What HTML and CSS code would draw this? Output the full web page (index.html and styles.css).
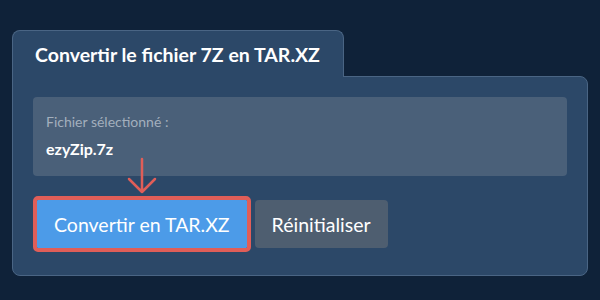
FILE: index.html
```html
<!DOCTYPE html>
<html lang="fr">
<head>
  <meta charset="UTF-8">
  <meta name="viewport" content="width=device-width, initial-scale=1.0">
  <title>Convertir 7Z en TAR.XZ</title>
  <link rel="stylesheet" href="styles.css">
</head>
<body>
  <div class="converter">
    <!-- Onglet titre -->
    <div class="tab">
      <h2>Convertir le fichier 7Z en TAR.XZ</h2>
    </div>

    <div class="panel">
      <div class="file-box">
        <div class="file-label">Fichier sélectionné :</div>
        <div class="file-name">ezyZip.7z</div>
      </div>

      <div class="actions">
        <button class="button button-primary">Convertir en TAR.XZ</button>
        <button class="button button-reset">Réinitialiser</button>
      </div>

      <!-- Flèche vers le bouton -->
      <svg class="hint-arrow" width="30" height="38" viewBox="0 0 30 38">
        <path d="M15 2 V35 M2 22 L15 35 L28 22" fill="none" stroke="#e05e58" stroke-width="2.5" stroke-linecap="round" stroke-linejoin="round"/>
      </svg>
    </div>
  </div>
</body>
</html>
```

FILE: styles.css
```css
body {
  font-family: Lato, "Open Sans", sans-serif;
  margin: 0;
  padding: 30px 12px;
  background-color: #0f2239;
  color: white;
}

.converter {
  width: 576px;
}

.tab {
  position: relative;
  z-index: 1;
  width: 332px;
  box-sizing: border-box;
  margin-bottom: -1px;
  padding: 12px 22px 10px;
  background-color: #2c4868;
  border: 1px solid #4a6584;
  border-bottom: none;
  border-radius: 8px 8px 0 0;
}

.tab h2 {
  margin: 0;
  font-size: 19.5px;
  line-height: 24px;
  font-weight: 700;
  white-space: nowrap;
}

.panel {
  position: relative;
  padding: 20px 20px 23px;
  background-color: #2c4868;
  border: 1px solid #4a6584;
  border-radius: 0 8px 8px 8px;
}

.file-box {
  padding: 15px 13px 16px;
  background-color: #4a6079;
  border-radius: 4px;
}

.file-label {
  font-size: 14px;
  line-height: 20px;
  color: #a3afbd;
  margin-bottom: 6px;
}

.file-name {
  font-size: 16px;
  line-height: 22px;
  font-weight: 700;
}

.actions {
  display: flex;
  align-items: center;
  gap: 4px;
  margin-top: 20px;
}

.button {
  font-family: inherit;
  font-size: 19.5px;
  color: white;
  border: none;
  cursor: pointer;
  height: 48px;
  padding: 0 17px;
}

.button-primary {
  height: 56px;
  background-color: #4c9be8;
  background-clip: padding-box;
  border: 4px solid #e05e58;
  border-radius: 5px;
}

.button-reset {
  background-color: #4e5e70;
  border-radius: 4px;
}

.hint-arrow {
  position: absolute;
  left: 114px;
  top: 80px;
}
```
